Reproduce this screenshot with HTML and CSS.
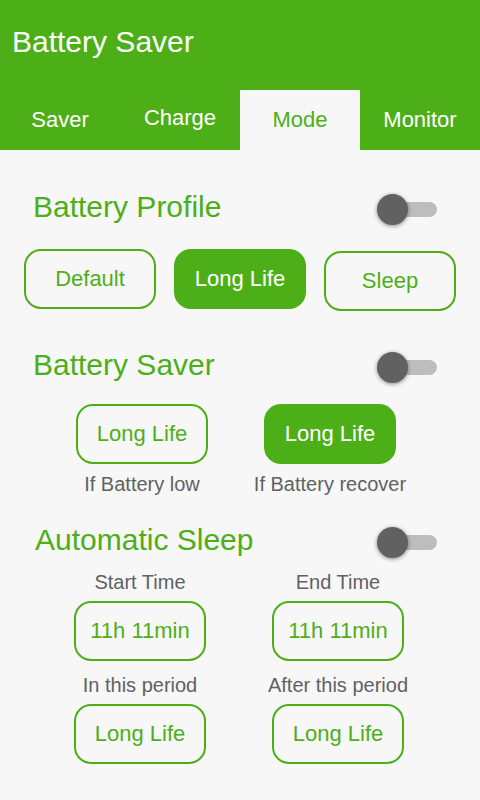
FILE: index.html
```html
<!DOCTYPE html>
<html lang="en">
<head>
    <meta charset="UTF-8">
    <meta name="viewport" content="width=device-width, initial-scale=1.0">
    <title>Battery Saver</title>
    <link rel="stylesheet" href="styles.css">
</head>
<body>
    <div class="app-bar">
        <div class="app-title">Battery Saver</div>
        <div class="tabs">
            <div class="tab">Saver</div>
            <div class="tab tab-raised">Charge</div>
            <div class="tab active">Mode</div>
            <div class="tab">Monitor</div>
        </div>
    </div>

    <div class="content">
        <!-- profile -->
        <div class="section profile">
            <div class="section-head">
                <h2>Battery Profile</h2>
                <div class="switch"><span class="track"></span><span class="knob"></span></div>
            </div>
            <div class="profile-row">
                <div class="btn">Default</div>
                <div class="btn filled">Long Life</div>
                <div class="btn low">Sleep</div>
            </div>
        </div>

        <!-- saver -->
        <div class="section saver">
            <div class="section-head">
                <h2>Battery Saver</h2>
                <div class="switch"><span class="track"></span><span class="knob"></span></div>
            </div>
            <div class="pair saver-pair">
                <div class="col">
                    <div class="btn">Long Life</div>
                    <div class="caption">If Battery low</div>
                </div>
                <div class="col">
                    <div class="btn filled">Long Life</div>
                    <div class="caption">If Battery recover</div>
                </div>
            </div>
        </div>

        <!-- sleep -->
        <div class="section sleep">
            <div class="section-head">
                <h2>Automatic Sleep</h2>
                <div class="switch"><span class="track"></span><span class="knob"></span></div>
            </div>
            <div class="pair sleep-pair">
                <div class="col">
                    <div class="caption">Start Time</div>
                    <div class="btn">11h 11min</div>
                    <div class="caption">In this period</div>
                    <div class="btn">Long Life</div>
                </div>
                <div class="col">
                    <div class="caption">End Time</div>
                    <div class="btn">11h 11min</div>
                    <div class="caption">After this period</div>
                    <div class="btn">Long Life</div>
                </div>
            </div>
        </div>
    </div>
</body>
</html>
```

FILE: styles.css
```css
body {
    margin: 0;
    font-family: "Liberation Sans", Arial, sans-serif;
    background: #f7f7f7;
    width: 480px;
    height: 800px;
    overflow: hidden;
}

.app-bar {
    background: #4daf18;
    color: #fff;
}

.app-title {
    height: 90px;
    box-sizing: border-box;
    padding: 25px 0 0 12px;
    font-size: 30px;
    line-height: 34px;
}

.tabs {
    display: grid;
    grid-template-columns: repeat(4, 1fr);
    height: 60px;
}

.tab {
    font-size: 22px;
    line-height: 60px;
    text-align: center;
}

.tab-raised {
    line-height: 56px;
}

.tab.active {
    background: #f7f7f7;
    color: #4daf18;
}

.section-head {
    display: flex;
    justify-content: space-between;
    align-items: flex-start;
    padding: 0 43px 0 33px;
}

.section-head h2 {
    margin: 0;
    font-weight: normal;
    font-size: 30px;
    line-height: 34px;
    color: #4daf18;
}

.sleep .section-head {
    padding-left: 35px;
}

/* android style switch, off */
.switch {
    position: relative;
    width: 60px;
    height: 31px;
    margin-top: 4px;
}

.switch .track {
    position: absolute;
    left: 8px;
    top: 8px;
    width: 52px;
    height: 15px;
    border-radius: 8px;
    background: #bdbdbd;
}

.switch .knob {
    position: absolute;
    left: 0;
    top: 0;
    width: 31px;
    height: 31px;
    border-radius: 50%;
    background: #616161;
    box-shadow: 0 1px 4px rgba(0, 0, 0, 0.45);
}

.btn {
    width: 132px;
    height: 60px;
    box-sizing: border-box;
    border: 2px solid #4daf18;
    border-radius: 17px;
    display: flex;
    align-items: center;
    justify-content: center;
    font-size: 22px;
    color: #4daf18;
}

.btn.filled {
    background: #4daf18;
    color: #fff;
}

.caption {
    font-size: 20px;
    line-height: 24px;
    color: #616161;
    text-align: center;
}

.profile {
    margin-top: 40px;
}

.profile-row {
    display: flex;
    align-items: flex-start;
    gap: 18px;
    padding-left: 24px;
    margin-top: 24px;
}

.btn.low {
    margin-top: 2px;
}

.saver {
    margin-top: 37px;
}

.pair {
    display: flex;
}

.col {
    width: 160px;
    display: flex;
    flex-direction: column;
    align-items: center;
}

.saver-pair {
    padding-left: 62px;
    gap: 28px;
    margin-top: 21px;
}

.saver-pair .caption {
    margin-top: 8px;
}

.sleep {
    margin-top: 27px;
}

.sleep-pair {
    padding-left: 60px;
    gap: 38px;
    margin-top: 12px;
}

.sleep-pair .caption + .btn {
    margin-top: 7px;
}

.sleep-pair .btn + .caption {
    margin-top: 12px;
}
```
